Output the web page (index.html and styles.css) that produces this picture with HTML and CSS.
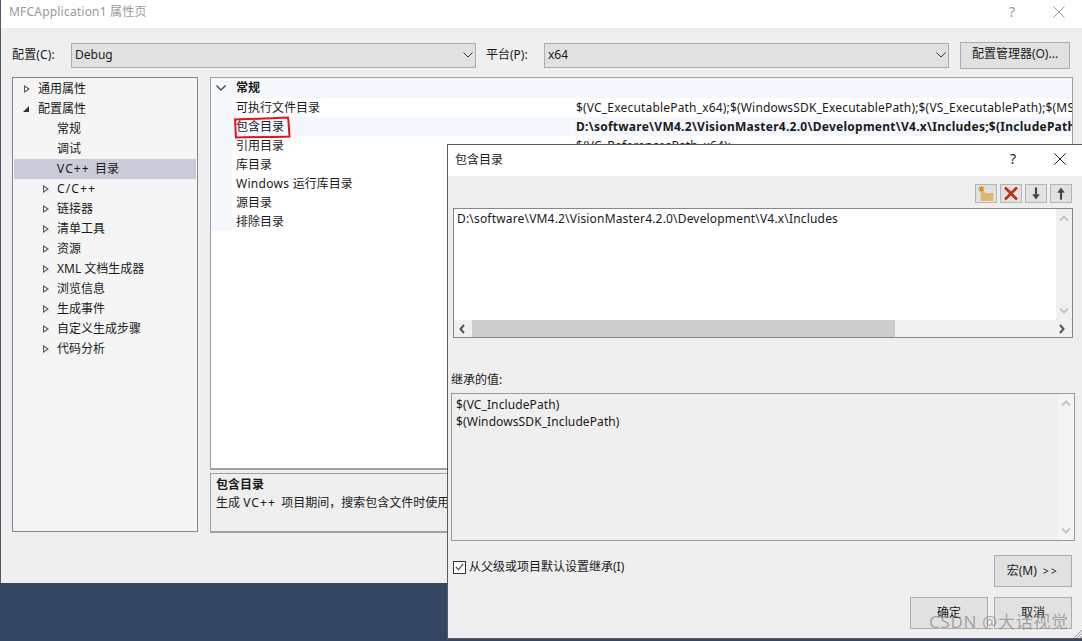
FILE: index.html
```html
<!DOCTYPE html>
<html lang="zh">
<head>
<meta charset="utf-8">
<title>MFCApplication1 属性页</title>
<link rel="stylesheet" href="styles.css">
</head>
<body>
<div class="desktop">
  <section class="window main-window">
    <header class="titlebar main-title">
      <span class="title-text muted">MFCApplication1 属性页</span>
      <span class="title-actions muted-actions">
        <span class="help">?</span>
        <svg class="close" viewBox="0 0 12 12" width="12" height="12"><path d="M.5.5l11 11M11.500.5l-11 11" fill="none" stroke="currentColor"/></svg>
      </span>
    </header>
    <div class="main-body">
      <div class="config-row">
        <label class="cfg-label cfg-first">配置(C):</label>
        <div class="combo combo-config"><span>Debug</span><svg class="chev" viewBox="0 0 10 6" width="10" height="6"><path d="M.5.5L5 5 9.500.5" fill="none" stroke="#333"/></svg></div>
        <label class="cfg-label cfg-second">平台(P):</label>
        <div class="combo combo-platform"><span>x64</span><svg class="chev" viewBox="0 0 10 6" width="10" height="6"><path d="M.5.5L5 5 9.500.5" fill="none" stroke="#333"/></svg></div>
        <button class="btn btn-manager">配置管理器(O)...</button>
      </div>
      <div class="panes">
        <nav class="tree">
          <div class="node"><i class="tri-open"></i>通用属性</div>
          <div class="node"><i class="tri-down"></i>配置属性</div>
          <div class="node lvl2">常规</div>
          <div class="node lvl2">调试</div>
          <div class="node lvl2 selected"><span class="wide">VC++ </span>目录</div>
          <div class="node lvl2"><i class="tri-open"></i><span class="wide">C/C++</span></div>
          <div class="node lvl2"><i class="tri-open"></i>链接器</div>
          <div class="node lvl2"><i class="tri-open"></i>清单工具</div>
          <div class="node lvl2"><i class="tri-open"></i>资源</div>
          <div class="node lvl2"><i class="tri-open"></i>XML 文档生成器</div>
          <div class="node lvl2"><i class="tri-open"></i>浏览信息</div>
          <div class="node lvl2"><i class="tri-open"></i>生成事件</div>
          <div class="node lvl2"><i class="tri-open"></i>自定义生成步骤</div>
          <div class="node lvl2"><i class="tri-open"></i>代码分析</div>
        </nav>
        <div class="right-pane">
          <div class="grid">
            <div class="grid-head">
              <svg class="head-chev" viewBox="0 0 10 6" width="10" height="6"><path d="M.5.5L5 5 9.500.5" fill="none" stroke="#444" stroke-width="1.300"/></svg>
              <b>常规</b>
            </div>
            <div class="row"><span class="k">可执行文件目录</span><span class="v">$(VC_ExecutablePath_x64);$(WindowsSDK_ExecutablePath);$(VS_ExecutablePath);$(MSBuild_ExecutablePath);$(FxCopDir);$(PATH)</span></div>
            <div class="row row-hi"><span class="k"><span class="marked">包含目录<svg class="scribble" viewBox="0 0 58 24" width="58" height="24"><path d="M2 3.500C18 3 36 2.500 55 1.500 56 8 56 15 56.500 20.500 40 21 20 21 3 21.500 2.500 15 2.500 9 2 3.500z" fill="none" stroke="#e4141c" stroke-width="2"/></svg></span></span><span class="v bold">D:\software\VM4.2\VisionMaster4.2.0\Development\V4.x\Includes;$(IncludePath)</span></div>
            <div class="row"><span class="k">引用目录</span><span class="v">$(VC_ReferencesPath_x64);</span></div>
            <div class="row"><span class="k">库目录</span><span class="v"></span></div>
            <div class="row"><span class="k"><span class="semi">Windows </span>运行库目录</span><span class="v"></span></div>
            <div class="row"><span class="k">源目录</span><span class="v"></span></div>
            <div class="row"><span class="k">排除目录</span><span class="v"></span></div>
          </div>
          <div class="desc">
            <b>包含目录</b>
            <p>生成 <span class="wide">VC++ </span>项目期间，搜索包含文件时使用的路径。</p>
          </div>
        </div>
      </div>
    </div>
  </section>

  <section class="window dialog">
    <header class="titlebar dlg-title">
      <span class="title-text">包含目录</span>
      <span class="title-actions">
        <span class="help">?</span>
        <svg class="close" viewBox="0 0 12 12" width="12" height="12"><path d="M.5.5l11 11M11.500.5l-11 11" fill="none" stroke="currentColor"/></svg>
      </span>
    </header>
    <div class="dlg-body">
      <div class="toolbar">
        <span class="tool"><svg viewBox="0 0 20 17" width="20" height="17"><path d="M4 6h5l1 1.500h8V16.500H4z" fill="#dcb877" stroke="#f4f0e6" stroke-width=".8"/><path d="M5.500 1v6M2.500 4h6M3.300 1.800l4.400 4.400M7.700 1.800L3.300 6.200" stroke="#d98a18" stroke-width="1.200" fill="none"/></svg></span>
        <span class="tool"><svg viewBox="0 0 20 17" width="20" height="17"><path d="M3.500 2l13 13M16.500 2l-13 13" fill="none" stroke="#f6e9e6" stroke-width="4.500"/><path d="M4 2.500l12 12M16 2.500l-12 12" fill="none" stroke="#b3331c" stroke-width="2.800"/></svg></span>
        <span class="tool"><svg viewBox="0 0 20 17" width="20" height="17"><path d="M8.500 2h3v7h3L10 15 5.500 9h3z" fill="#444" stroke="#f2f2f2" stroke-width=".7"/></svg></span>
        <span class="tool"><svg viewBox="0 0 20 17" width="20" height="17"><path d="M8.500 15h3V8h3L10 2 5.500 8h3z" fill="#444" stroke="#f2f2f2" stroke-width=".7"/></svg></span>
      </div>
      <div class="listbox">
        <div class="list-main">
          <div class="list-text">D:\software\VM4.2\VisionMaster4.2.0\Development\V4.x\Includes</div>
          <div class="vscroll">
            <svg viewBox="0 0 10 6" width="10" height="6"><path d="M1 5.500L5 1.500l4 4" fill="none" stroke="#c4c4c4" stroke-width="2"/></svg>
            <svg viewBox="0 0 10 6" width="10" height="6"><path d="M1 .5l4 4 4-4" fill="none" stroke="#c4c4c4" stroke-width="2"/></svg>
          </div>
        </div>
        <div class="hscroll">
          <svg class="sarrow" viewBox="0 0 6 10" width="6" height="10"><path d="M5 1L1.500 5 5 9" fill="none" stroke="#555" stroke-width="2"/></svg>
          <div class="track"><div class="thumb"></div></div>
          <svg class="sarrow" viewBox="0 0 6 10" width="6" height="10"><path d="M1 1l3.500 4L1 9" fill="none" stroke="#555" stroke-width="2"/></svg>
        </div>
      </div>
      <div class="inherit-label">继承的值:</div>
      <div class="inherit-box">
        <div class="inherit-text">
          <div>$(VC_IncludePath)</div>
          <div>$(WindowsSDK_IncludePath)</div>
        </div>
        <div class="vscroll vscroll-in">
          <svg viewBox="0 0 10 6" width="10" height="6"><path d="M1 5.500L5 1.500l4 4" fill="none" stroke="#c4c4c4" stroke-width="2"/></svg>
          <svg viewBox="0 0 10 6" width="10" height="6"><path d="M1 .5l4 4 4-4" fill="none" stroke="#c4c4c4" stroke-width="2"/></svg>
        </div>
      </div>
      <div class="check-row">
        <label class="check">
          <span class="box"><svg viewBox="0 0 12 12" width="12" height="12"><path d="M2 6l3 3 5-6.500" fill="none" stroke="#444" stroke-width="1.200"/></svg></span>
          从父级或项目默认设置继承(I)
        </label>
        <button class="btn btn-wide">宏(M) <span class="gt">&gt;&gt;</span></button>
      </div>
      <div class="action-row">
        <button class="btn btn-wide">确定</button>
        <button class="btn btn-wide">取消</button>
      </div>
    </div>
    <svg class="grip" viewBox="0 0 8 8" width="8" height="8"><path d="M8 0L0 8M8 3L3 8M8 6L6 8" stroke="#9a9a9a" fill="none"/></svg>
    <span class="watermark">CSDN @大话视觉</span>
  </section>
</div>
</body>
</html>
```
FILE: styles.css
```css
* { box-sizing: border-box; }
html, body { margin: 0; padding: 0; }
body {
  width: 1082px;
  height: 641px;
  overflow: hidden;
  background: #344662;
  font: 12px/16px "Noto Sans", "Noto Sans CJK SC", sans-serif;
  color: #1a1a1a;
}
.desktop { position: relative; width: 1082px; height: 641px; overflow: hidden; }
.window { position: absolute; display: flex; flex-direction: column; background: #efefef; }
.main-window { left: 0; top: 0; width: 1082px; height: 583px; border-left: 1px solid #4d5a70; }
.titlebar { display: flex; align-items: center; justify-content: space-between; background: #fff; flex: none; }
.main-title { height: 28px; padding: 0 17px 4px 8px; }
.title-text.muted { color: #999; font-size: 12px; letter-spacing: .2px; }
.title-actions { display: flex; align-items: center; gap: 38px; color: #222; }
.muted-actions { color: #999; }
.help { font-size: 14px; }
.close { display: block; }
.main-body { flex: 1; display: flex; flex-direction: column; padding: 13px 9px 0 11px; }
.config-row { display: flex; align-items: center; height: 28px; }
.cfg-label { flex: none; }
.cfg-first { width: 59px; letter-spacing: .15px; }
.cfg-second { width: 58px; margin-left: 10px; }
.combo {
  height: 25px;
  display: flex; align-items: center; justify-content: space-between;
  padding: 0 1px 0 3px;
  background: #e1e1e1;
  border: 1px solid #adadad;
}
.combo-config { width: 405px; }
.combo-platform { width: 405px; }
.chev { margin-right: 1px; }
.btn {
  font: inherit;
  color: #1a1a1a;
  background: #e1e1e1;
  border: 1px solid #adadad;
  padding: 0 0 2px;
}
.btn-manager { width: 110px; height: 27px; margin-left: 11px; }
.panes { display: flex; gap: 12px; margin-top: 8px; height: 456px; }
.tree {
  width: 186px;
  height: 455px;
  padding-top: 1px;
  background: #f5f5f5;
  border: 1px solid #85858d;
}
.node { position: relative; height: 20px; line-height: 20px; padding-left: 24px; margin: 0 1px; }
.lvl2 { padding-left: 43px; }
.selected { background: #cacbd9; }
.wide { letter-spacing: 1.100px; word-spacing: 1px; }
.semi { letter-spacing: .3px; }
.tri-open, .tri-down { position: absolute; top: 6px; }
.tri-open {
  left: 10px;
  width: 0; height: 0;
  border-left: 6px solid #555;
  border-top: 4px solid transparent;
  border-bottom: 4px solid transparent;
}
.tri-open::after {
  content: "";
  position: absolute;
  left: -5px; top: -2.500px;
  width: 0; height: 0;
  border-left: 3.500px solid #f5f5f5;
  border-top: 2.500px solid transparent;
  border-bottom: 2.500px solid transparent;
}
.lvl2 .tri-open { left: 29px; }
.tri-down {
  left: 9px; top: 7px;
  width: 0; height: 0;
  border-right: 6px solid #333;
  border-top: 6px solid transparent;
}
.right-pane { flex: 1; display: flex; flex-direction: column; gap: 3px; min-width: 0; }
.grid {
  height: 393px;
  flex: none;
  background: #fff;
  border: 1px solid #a0a0a0;
  border-bottom-width: 2px;
  overflow: hidden;
}
.grid-head {
  height: 20px;
  display: flex; align-items: center; gap: 10px;
  padding-left: 5px;
  background: #f4f7fb;
}
.row { display: flex; height: 19px; line-height: 19px; white-space: nowrap; background: linear-gradient(to right, #f4f7fb 21px, #fff 21px); }
.k { flex: none; width: 340px; padding-left: 4px; margin-left: 21px; background: #fff; }
.v { overflow: hidden; padding-left: 3px; border-left: 1px solid #fff; letter-spacing: .18px; }
.row-hi { background: #f4f7fb; }
.row-hi .k { background: #f4f7fb; }
.bold { font-weight: 700; letter-spacing: .26px; }
.marked { display: inline-block; position: relative; }
.scribble { position: absolute; left: -3px; top: -1px; overflow: visible; }
.desc {
  height: 60px;
  padding: 2px 5px;
  background: #efefef;
  border: 1px solid #a0a0a0;
  border-bottom-width: 2px;
}
.desc b { display: block; line-height: 17px; }
.desc p { margin: 0; line-height: 19px; white-space: nowrap; overflow: hidden; }
.dialog {
  left: 447px; top: 144px;
  width: 635px; height: 495px;
  border: 1px solid #5b5b5b;
  border-right: 0;
  background: #efefef;
}
.dlg-title { height: 31px; padding: 0 16px 2px 7px; }
.dlg-title .title-actions { gap: 38px; margin-top: -1px; }
.dlg-title .title-text { font-size: 12px; }
.dlg-body { flex: 1; display: flex; flex-direction: column; padding: 8px 9px 0 3px; }
.toolbar { display: flex; justify-content: flex-end; gap: 3px; padding-right: 1px; }
.tool {
  width: 22px; height: 19px;
  display: flex; align-items: center; justify-content: center;
  background: #e1e1e1;
  border: 1px solid #b5b5b5;
}
.listbox {
  margin: 5px 0 0 2px;
  height: 130px;
  flex: none;
  background: #efefef;
  border: 1px solid #85858d;
  display: flex; flex-direction: column;
}
.list-main { flex: 1; display: flex; min-height: 0; }
.list-text { flex: 1; background: #fff; padding: 2px 3px; white-space: nowrap; letter-spacing: .18px; }
.vscroll {
  width: 16px; flex: none;
  display: flex; flex-direction: column; justify-content: space-between; align-items: center;
  padding: 6px 0;
  background: #f0f0f0;
}
.hscroll { height: 17px; flex: none; display: flex; align-items: center; padding: 0 7px 0 5px; background: #f0f0f0; }
.track { flex: 1; height: 17px; margin: 0 4px 0 7px; }
.thumb { width: 423px; height: 17px; background: #cdcdcd; }
.sarrow { flex: none; }
.inherit-label { margin-top: 34px; height: 16px; line-height: 16px; }
.inherit-box {
  margin: 5px -2px 0 0;
  height: 148px;
  flex: none;
  display: flex;
  background: #efefef;
  border: 1px solid #9a9a9a;
}
.inherit-text { flex: 1; padding: 2px 4px; line-height: 17px; letter-spacing: .1px; }
.vscroll-in { background: #f4f4f4; }
.check-row { display: flex; justify-content: space-between; align-items: flex-start; margin-top: 14px; padding: 0 1px 0 2px; }
.check { display: flex; align-items: center; gap: 3px; margin-top: 4px; }
.box {
  width: 13px; height: 13px;
  display: flex; align-items: center; justify-content: center;
  background: #fff;
  border: 1px solid #333;
}
.btn-wide { width: 78px; height: 32px; padding-bottom: 1px; }
.gt { font-size: 10px; letter-spacing: 2.500px; margin-left: 3px; }
.action-row { display: flex; justify-content: flex-end; gap: 6px; margin-top: 10px; padding-right: 1px; }
.grip { position: absolute; right: 0; bottom: 0; }
.watermark {
  position: absolute;
  left: 481px; top: 465px;
  font-size: 17px;
  line-height: 24px;
  letter-spacing: .65px;
  color: rgba(120, 120, 120, .6);
  white-space: nowrap;
}
```
